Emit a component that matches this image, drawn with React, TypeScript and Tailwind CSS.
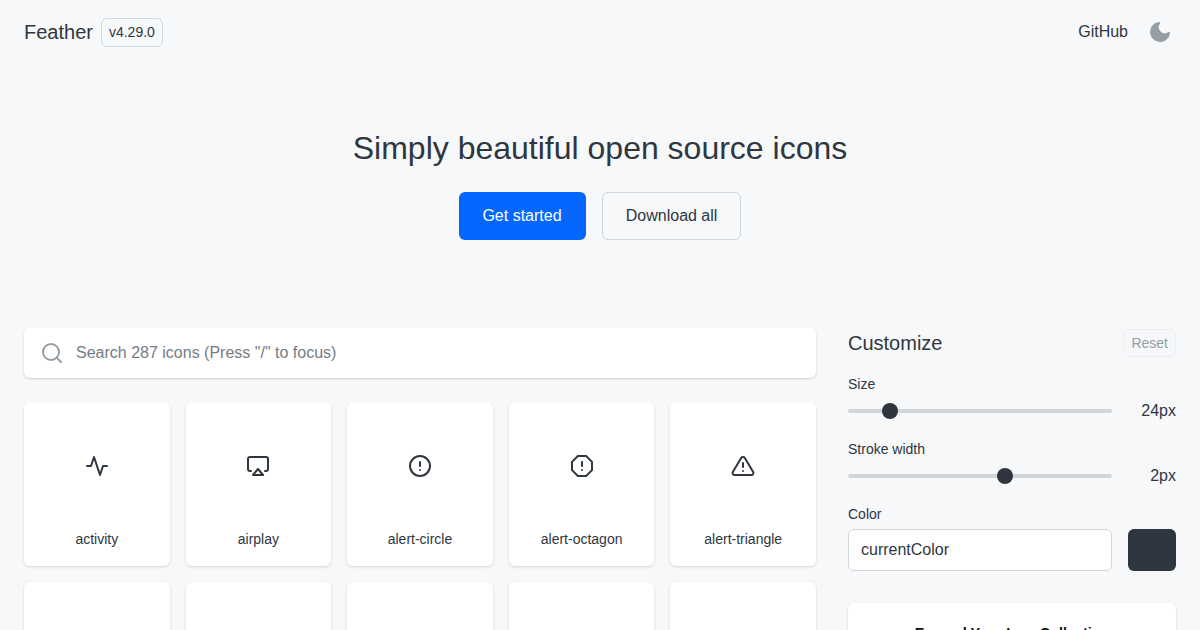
import { FiActivity, FiAirplay, FiAlertCircle, FiAlertOctagon, FiAlertTriangle, FiSearch } from "react-icons/fi";

const icons = [
  { name: "activity", Icon: FiActivity },
  { name: "airplay", Icon: FiAirplay },
  { name: "alert-circle", Icon: FiAlertCircle },
  { name: "alert-octagon", Icon: FiAlertOctagon },
  { name: "alert-triangle", Icon: FiAlertTriangle },
];

function Slider({ label, value, percent }: { label: string; value: string; percent: number }) {
  return (
    <div className="mt-4 first:mt-0">
      <div className="text-sm leading-[21px] h-[21px] text-[#2f363f]">{label}</div>
      <div className="flex items-center justify-between h-[24px] mt-1">
        <div className="relative w-[264px] h-1 rounded-full bg-[#d1d5da]">
          <div
            className="absolute top-1/2 w-4 h-4 -mt-2 -ml-2 rounded-full bg-[#2f363f]"
            style={{ left: `${percent}%` }}
          />
        </div>
        <div className="text-base text-[#2f363f]">{value}</div>
      </div>
    </div>
  );
}

export default function App() {
  return (
    <div className="h-[630px] overflow-hidden bg-[#f6f8fa] text-[#2f363f] font-['Liberation_Sans',sans-serif]">
      <header className="flex items-center justify-between h-16 pl-6 pr-[28px]">
        <div className="flex items-center gap-2">
          <span className="text-xl">Feather</span>
          <span className="flex items-center h-[29px] px-[7px] text-sm rounded-md border border-[#d5d9de]">v4.29.0</span>
        </div>
        <div className="flex items-center gap-5">
          <span className="text-base">GitHub</span>
          <svg width="24" height="24" viewBox="0 0 24 24" className="fill-[#959da5]">
            <path d="M21 12.79A9 9 0 1 1 11.21 3 7 7 0 0 0 21 12.79z" stroke="#959da5" strokeWidth="2" strokeLinejoin="round" />
          </svg>
        </div>
      </header>

      <section className="flex flex-col items-center pt-[64px]">
        <h1 className="text-[32px] leading-10 font-normal">Simply beautiful open source icons</h1>
        <div className="flex gap-4 mt-6">
          <button className="h-12 pl-[23.5px] pr-[24.5px] rounded-md bg-[#0366ff] text-white text-base">Get started</button>
          <button className="h-12 w-[139px] rounded-md border border-[#d1d5da] text-base">Download all</button>
        </div>
      </section>

      <main className="flex gap-8 px-6 mt-[88px]">
        <div className="w-[792px] shrink-0">
          <div className="flex items-center gap-3 h-[50px] px-4 rounded-md bg-white shadow-[0_1px_2px_rgba(27,31,35,0.2)]">
            <FiSearch size={24} strokeWidth={2} className="text-[#959da5]" />
            <span className="text-base text-[#757c83]">Search 287 icons (Press "/" to focus)</span>
          </div>
          <div className="grid grid-cols-5 gap-4 mt-6">
            {icons.map(({ name, Icon }) => (
              <div key={name} className="flex flex-col items-center h-[164px] rounded-md bg-white shadow-[0_1px_3px_rgba(27,31,35,0.15)]">
                <Icon size={24} strokeWidth={2} className="mt-[52px] text-[#2f363f]" />
                <span className="mt-[51px] text-sm text-[#2f363f]">{name}</span>
              </div>
            ))}
            {icons.map(({ name }) => (
              <div key={`${name}-next`} className="h-[164px] rounded-md bg-white shadow-[0_1px_3px_rgba(27,31,35,0.15)]" />
            ))}
          </div>
        </div>

        <aside className="w-[328px] shrink-0">
          <div className="flex items-center justify-between h-[30px]">
            <h2 className="text-xl font-normal">Customize</h2>
            <button className="h-[28px] px-[7px] rounded-md border border-[#eceef1] text-sm text-[#959da5]">Reset</button>
          </div>
          <div className="mt-4">
            <Slider label="Size" value="24px" percent={16} />
            <Slider label="Stroke width" value="2px" percent={59.5} />
          </div>
          <div className="mt-4 text-sm leading-[21px] h-[21px]">Color</div>
          <div className="flex gap-4 mt-1">
            <div className="flex items-center w-[264px] h-[42px] px-3 rounded-md bg-white border border-[#d1d5da] text-base">currentColor</div>
            <div className="w-12 h-[42px] rounded-md bg-[#2f363f]" />
          </div>
          <div className="mt-8 h-[120px] pt-[20px] rounded-md bg-white shadow-[0_1px_3px_rgba(27,31,35,0.15)] text-center text-[14.4px] font-bold text-[#111]">
            Expand Your Icon Collection
          </div>
        </aside>
      </main>
    </div>
  );
}
